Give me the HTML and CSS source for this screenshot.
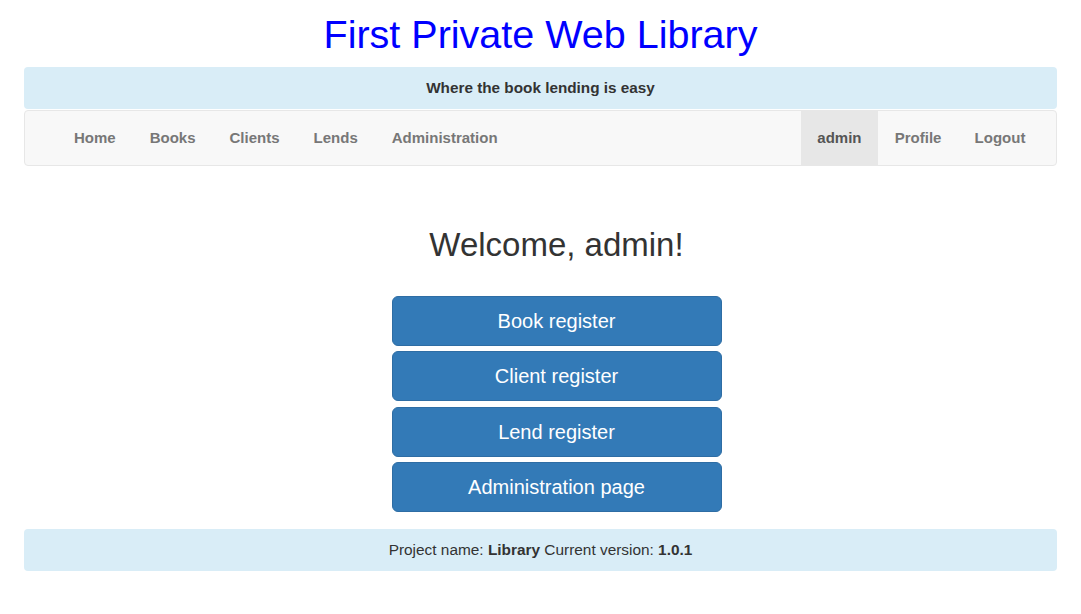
FILE: index.html
```html
<!DOCTYPE html>
<html>
<head>
<meta charset="utf-8">
<title>First Private Web Library</title>
<link rel="stylesheet" href="styles.css">
</head>
<body>
<div class="page">
  <h1 class="title">First Private Web Library</h1>
  <div class="banner">Where the book lending is easy</div>
  <nav class="navbar">
    <ul class="nav">
      <li><a href="#">Home</a></li>
      <li><a href="#">Books</a></li>
      <li><a href="#">Clients</a></li>
      <li><a href="#">Lends</a></li>
      <li><a href="#">Administration</a></li>
    </ul>
    <ul class="nav nav-right">
      <li class="active"><a href="#">admin</a></li>
      <li><a href="#">Profile</a></li>
      <li><a href="#">Logout</a></li>
    </ul>
  </nav>
  <main class="main">
    <h2 class="welcome">Welcome, admin!</h2>
    <div class="actions">
      <a class="btn" href="#">Book register</a>
      <a class="btn" href="#">Client register</a>
      <a class="btn" href="#">Lend register</a>
      <a class="btn" href="#">Administration page</a>
    </div>
  </main>
  <footer class="footer">Project name: <b>Library</b> Current version: <b>1.0.1</b></footer>
</div>
</body>
</html>
```
FILE: styles.css
```css
html, body {
  margin: 0;
  padding: 0;
  background: #fff;
}
body {
  font-family: "Liberation Sans", Arial, Helvetica, sans-serif;
  font-size: 14px;
  color: #333;
}
.page {
  padding: 0 24px;
}
.title {
  margin: 0;
  padding-top: 11px;
  height: 56px;
  box-sizing: border-box;
  text-align: center;
  font-weight: normal;
  font-size: 39.5px;
  line-height: 46px;
  color: #0000ff;
}
.banner {
  background: #d9edf7;
  border-radius: 4px;
  margin-top: 11px;
  height: 42px;
  line-height: 42px;
  text-align: center;
  font-weight: bold;
  font-size: 15.3px;
  color: #333;
}
.navbar {
  margin-top: 1px;
  height: 56px;
  box-sizing: border-box;
  background: #f8f8f8;
  border: 1px solid #e7e7e7;
  border-radius: 4px;
  display: flex;
  justify-content: space-between;
  padding: 0 14px 0 32px;
}
.nav {
  list-style: none;
  margin: 0;
  padding: 0;
  display: flex;
}
.nav li a {
  display: block;
  padding: 0 17px;
  line-height: 54px;
  color: #777;
  font-weight: bold;
  font-size: 15px;
  text-decoration: none;
}
.nav-right li a {
  padding: 0 16.6px;
}
.nav li.active a {
  background: #e7e7e7;
  color: #555;
}
.main {
  display: flex;
  flex-direction: column;
  align-items: center;
  padding-left: 32px;
}
.welcome {
  margin: 0;
  padding-top: 60px;
  font-weight: normal;
  font-size: 33px;
  line-height: 38px;
  color: #333;
}
.actions {
  margin-top: 32px;
  display: flex;
  flex-direction: column;
  gap: 5.33px;
  width: 330px;
}
.btn {
  display: block;
  box-sizing: border-box;
  height: 50px;
  line-height: 48px;
  text-align: center;
  background: #337ab7;
  border: 1px solid #2e6da4;
  border-radius: 6px;
  color: #fff;
  font-size: 20px;
  text-decoration: none;
}
.footer {
  margin-top: 17px;
  background: #d9edf7;
  border-radius: 4px;
  height: 42px;
  line-height: 41px;
  text-align: center;
  font-size: 15.4px;
  color: #333;
}
```
